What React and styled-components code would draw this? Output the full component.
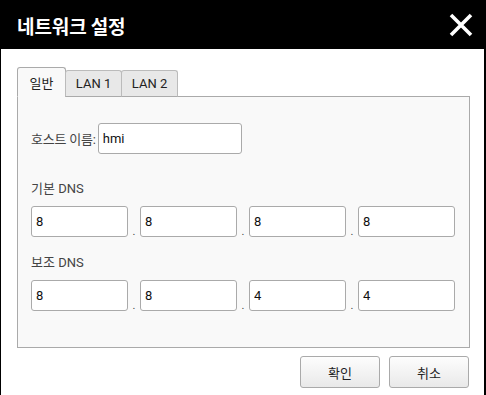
import styled, { createGlobalStyle } from 'styled-components'

const GlobalStyle = createGlobalStyle`
    html, body {
        margin: 0;
        padding: 0;
        background: #ffffff;
    }
    body {
        font-family: Roboto, "Noto Sans CJK KR", "Noto Sans", sans-serif;
        font-size: 13px;
        color: #222;
    }
    * {
        box-sizing: border-box;
    }
`

const tabs = ['일반', 'LAN 1', 'LAN 2']

const primaryDns = ['8', '8', '8', '8']
const secondaryDns = ['8', '8', '4', '4']

const CloseIcon = () => (
    <svg width="24" height="24" viewBox="0 0 24 24">
        <path d="M2 2 L22 22 M22 2 L2 22" stroke="#fff" strokeWidth="3.6" strokeLinecap="butt" fill="none" />
    </svg>
)

const DnsRow = ({ values }) => (
    <IpRow>
        {values.map((v, i) => (
            <IpCell key={i}>
                <IpInput defaultValue={v} />
                {i < values.length - 1 && <Dot>.</Dot>}
            </IpCell>
        ))}
    </IpRow>
)

const App = () => {
    return (
        <>
            <GlobalStyle />
            <Dialog>
                <TitleBar>
                    <Title>네트워크 설정</Title>
                    <CloseButton>
                        <CloseIcon />
                    </CloseButton>
                </TitleBar>

                <Body>
                    <TabBar>
                        {tabs.map((t, i) => (
                            <Tab key={t} $active={i === 0}>{t}</Tab>
                        ))}
                    </TabBar>

                    <Panel>
                        <HostRow>
                            <Label>호스트 이름:</Label>
                            <HostInput defaultValue="hmi" />
                        </HostRow>

                        <SectionLabel>기본 DNS</SectionLabel>
                        <DnsRow values={primaryDns} />

                        <SectionLabel $tight>보조 DNS</SectionLabel>
                        <DnsRow values={secondaryDns} />
                    </Panel>

                    <Footer>
                        <Button>확인</Button>
                        <Button>취소</Button>
                    </Footer>
                </Body>
            </Dialog>
        </>
    )
}

const Dialog = styled.div`
    width: 486px;
    height: 395px;
    background: #ffffff;
    border-left: 1px solid #000;
    border-right: 2px solid #000;
    display: flex;
    flex-direction: column;
    overflow: hidden;
`

const TitleBar = styled.div`
    height: 49px;
    flex: none;
    background: #000;
    color: #fff;
    display: flex;
    align-items: center;
    justify-content: space-between;
    padding: 0 11px 0 16px;
`

const Title = styled.div`
    font-family: "Noto Sans CJK KR", Roboto, sans-serif;
    font-size: 19px;
    font-weight: 700;
    letter-spacing: -0.1px;
    padding-top: 1px;
`

const CloseButton = styled.div`
    width: 24px;
    height: 24px;
    display: flex;
    cursor: pointer;
`

const Body = styled.div`
    padding: 18px 14px 0 16px;
    display: flex;
    flex-direction: column;
`

const TabBar = styled.div`
    display: flex;
    align-items: flex-end;
    height: 30px;
    position: relative;
    z-index: 1;
    margin-bottom: -1px;
`

const Tab = styled.div`
    height: ${p => (p.$active ? '30px' : '27px')};
    width: ${p => (p.$active ? '49px' : '57px')};
    margin-right: -1px;
    display: flex;
    align-items: center;
    justify-content: center;
    border: 1px solid ${p => (p.$active ? '#aaa' : '#bbb')};
    border-bottom: ${p => (p.$active ? '1px solid #f9f9f9' : '1px solid #aaa')};
    border-radius: 3px 3px 0 0;
    background: ${p => (p.$active ? '#f9f9f9' : '#e8e8e8')};
    color: #222;
    font-size: 13px;
    padding-top: ${p => (p.$active ? '1px' : '0')};
`

const Panel = styled.div`
    height: 252px;
    border: 1px solid #aaa;
    background: #f9f9f9;
    padding: 26px 13px 0 13px;
    display: flex;
    flex-direction: column;
`

const HostRow = styled.div`
    display: flex;
    align-items: center;
    gap: 2px;
`

const Label = styled.span`
    color: #444;
    font-size: 13px;
    letter-spacing: -0.2px;
`

const inputBase = `
    height: 31px;
    border: 1px solid #aaa;
    border-radius: 3px;
    background: #fff;
    font-family: Roboto, "Noto Sans CJK KR", sans-serif;
    font-size: 13px;
    color: #111;
    padding: 0 4px;
    outline: none;
`

const HostInput = styled.input`
    ${inputBase}
    width: 144px;
`

const SectionLabel = styled.div`
    color: #444;
    font-size: 13px;
    margin: ${p => (p.$tight ? '18px 0 10px' : '27px 0 10px')};
    line-height: 15px;
`

const IpRow = styled.div`
    display: flex;
`

const IpCell = styled.div`
    display: flex;
    align-items: flex-end;
`

const IpInput = styled.input`
    ${inputBase}
    width: 97px;
`

const Dot = styled.span`
    width: 12px;
    text-align: center;
    color: #444;
    font-size: 11px;
    line-height: 8px;
    margin-bottom: 1px;
`

const Footer = styled.div`
    display: flex;
    justify-content: flex-end;
    gap: 9px;
    margin-top: 8px;
    padding-right: 1px;
`

const Button = styled.div`
    width: 80px;
    height: 32px;
    border: 1px solid #aaa;
    border-radius: 3px;
    background: linear-gradient(#fdfdfd, #e9e9e9);
    display: flex;
    align-items: center;
    justify-content: center;
    color: #222;
    font-size: 13px;
    cursor: pointer;
`

export default App
